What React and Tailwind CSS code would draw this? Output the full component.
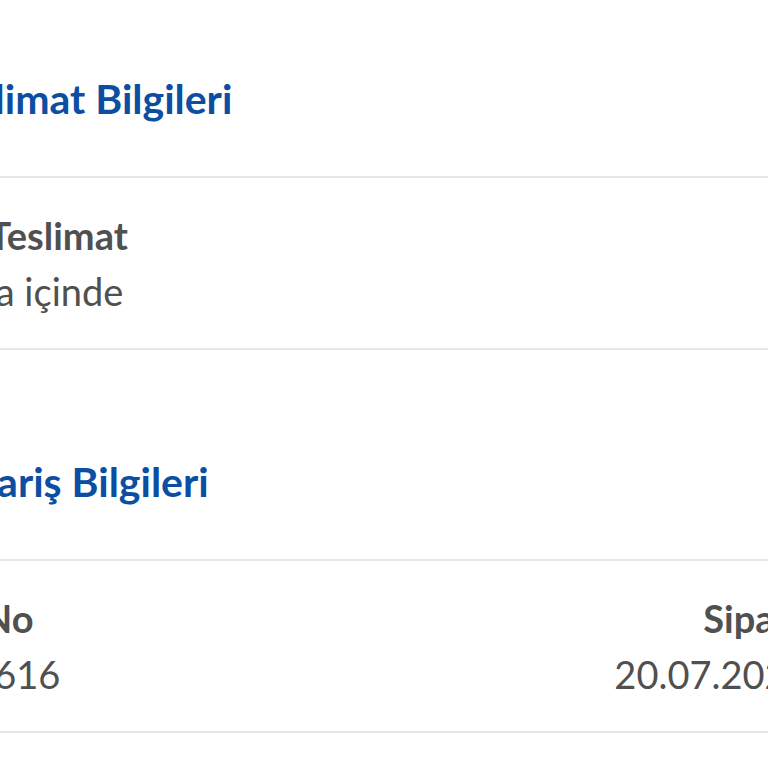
const sections = [
  {
    title: 'Teslimat Bilgileri',
    indent: 'pl-[97px]',
    left: { label: 'Adrese Teslimat', value: '1-2 hafta içinde' },
  },
  {
    title: 'Sipariş Bilgileri',
    indent: 'pl-[103px]',
    left: { label: 'Sipariş No', value: '574203616' },
    right: { label: 'Sipariş Tarihi', value: '20.07.2023 09:42' },
  },
];

const Section = ({ title, indent, left, right, first }) => {
  return (
    <section className={first ? '' : 'mt-[108px]'}>
      <h2
        className={`${indent} pb-[53px] text-[41px] leading-[48px] font-bold text-[#0b4ea2]`}
      >
        {title}
      </h2>
      <div className="flex justify-between border-y-2 border-[#e6e6e6] px-6 py-[29px] text-[38px] leading-[56px] text-[#505050]">
        <div>
          <p className="font-bold">{left.label}</p>
          <p>{left.value}</p>
        </div>
        {right && (
          <div className="text-right">
            <p className="font-bold">{right.label}</p>
            <p>{right.value}</p>
          </div>
        )}
      </div>
    </section>
  );
};

export default function App() {
  return (
    <div className="h-[768px] w-[768px] overflow-hidden bg-white font-['Lato',sans-serif]">
      {/* page is cropped: content runs past both edges */}
      <div className="-ml-[162px] w-[1102px] pt-[75px]">
        {sections.map((s, i) => (
          <Section key={s.title} first={i === 0} {...s} />
        ))}
      </div>
    </div>
  );
}
